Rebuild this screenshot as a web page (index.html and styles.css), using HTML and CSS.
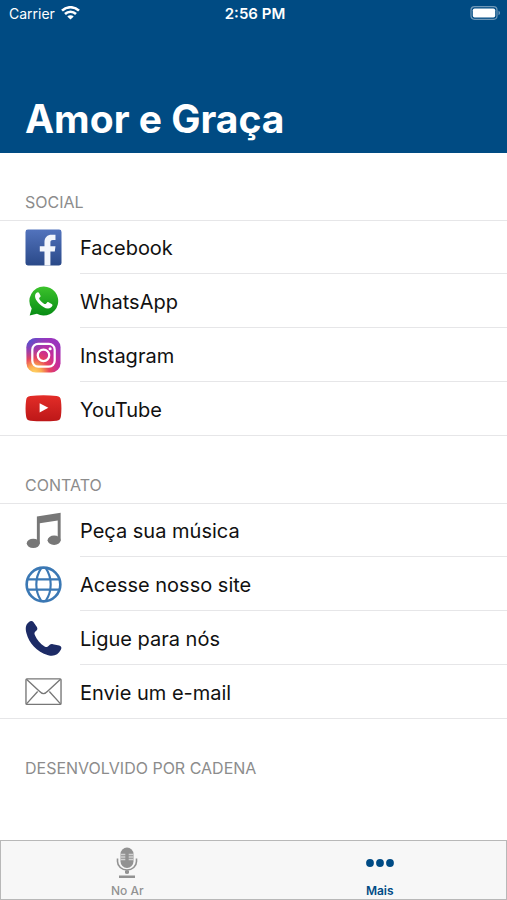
FILE: index.html
```html
<!DOCTYPE html>
<html lang="pt-BR">
<head>
<meta charset="utf-8">
<meta name="viewport" content="width=device-width, initial-scale=1">
<title>Amor e Graça</title>
<link rel="stylesheet" href="styles.css">
</head>
<body>
<div class="app">
  <header class="header">
    <div class="status">
      <span class="carrier">Carrier
        <svg width="19" height="15" viewBox="0 0 19 15" fill="none" stroke="#fff" stroke-width="2.600" aria-hidden="true">
          <path d="M1 4.600a12.400 12.400 0 0 1 17 0"/>
          <path d="M4 8a8 8 0 0 1 11 0"/>
          <path d="M9.500 13.600L6.300 10.600a4.600 4.600 0 0 1 6.400 0z" fill="#fff" stroke="none"/>
        </svg>
      </span>
      <time class="clock">2:56 PM</time>
      <svg class="battery" width="31" height="14" viewBox="0 0 31 14" aria-hidden="true">
        <rect x="1" y=".7" width="26" height="12.600" rx="3.500" fill="none" stroke="#6f98b8" stroke-width="1.200"/>
        <rect x="2.800" y="2.500" width="22.400" height="9" rx="1.800" fill="#fff"/>
        <path d="M28.500 4.800c2 .7 2 3.700 0 4.400z" fill="#6f98b8"/>
      </svg>
    </div>
    <h1 class="title">Amor e Graça</h1>
  </header>

  <main class="content">
    <section>
      <h2 class="heading">SOCIAL</h2>
      <ul class="list">
        <li class="row"><a class="link" href="#facebook">
          <svg class="icon" viewBox="0 0 38 38" aria-hidden="true">
            <defs><linearGradient id="fb" x2="0" y2="1"><stop stop-color="#5273bd"/><stop offset="1" stop-color="#2a4988"/></linearGradient></defs>
            <rect x=".5" y=".5" width="37" height="37" rx="2.500" fill="url(#fb)"/>
            <path d="M20 37.500V23h-4.800v-5.300H20v-4.200c0-5 3-7.700 7.400-7.700 1.800 0 3 .1 3.900.2v5.200h-2.600c-2.200 0-2.600 1.100-2.600 2.700v3.800h5.200l-.7 5.300h-4.500v14.500z" fill="#f3f6fc"/>
          </svg>
          <span class="label">Facebook</span></a></li>
        <li class="row"><a class="link" href="#whatsapp">
          <svg class="icon" viewBox="0 0 38 38" aria-hidden="true">
            <defs><linearGradient id="wa" x2="0" y2="1"><stop stop-color="#3cc32c"/><stop offset="1" stop-color="#078c14"/></linearGradient></defs>
            <path d="M19.300 3.500a14.900 14.900 0 1 1-7 28.100L4.800 33.500l2.100-7.200A14.900 14.900 0 0 1 19.300 3.500z" fill="url(#wa)"/>
            <path d="M14.500 10.200c-.6-1.100-1.800-1-2.900 0-2.700 2.700-.9 7.200 3 11 3.500 3.500 8.400 6.500 12 4 1.700-1.200 2-2.600 1.200-3.300l-3.600-2.200c-1-.6-1.500.1-2.400 1.300-.8.900-1.500.7-3-.3-1.900-1.200-3.100-2.600-4-4-.6-1-.1-1.300.8-2.300.5-.6.4-1.100.2-1.600z" fill="#fff"/>
          </svg>
          <span class="label">WhatsApp</span></a></li>
        <li class="row"><a class="link" href="#instagram">
          <svg class="icon" viewBox="0 0 38 38" aria-hidden="true">
            <defs>
              <radialGradient id="ig" cx=".23" cy="1.020" r="1.050"><stop stop-color="#ffd765"/><stop offset=".2" stop-color="#fbad50"/><stop offset=".42" stop-color="#e8445b"/><stop offset=".68" stop-color="#c82c98"/><stop offset="1" stop-color="#9a35bd"/></radialGradient>
              <radialGradient id="igb" cx="0" cy="0" r=".65"><stop stop-color="#405bd2"/><stop offset="1" stop-color="#6550ce" stop-opacity="0"/></radialGradient>
            </defs>
            <rect x="1.500" y="1" width="35" height="35.500" rx="9.500" fill="url(#ig)"/>
            <rect x="1.500" y="1" width="35" height="35.500" rx="9.500" fill="url(#igb)"/>
            <g fill="none" stroke="#fff" stroke-width="2.300"><rect x="7.500" y="7" width="23" height="23.500" rx="6"/><circle cx="19" cy="18.800" r="5.900"/></g>
            <circle cx="25.800" cy="12" r="1.600" fill="#fff"/>
          </svg>
          <span class="label">Instagram</span></a></li>
        <li class="row"><a class="link" href="#youtube">
          <svg class="icon" viewBox="0 0 38 38" aria-hidden="true">
            <defs><linearGradient id="yt" x2="0" y2="1"><stop stop-color="#e32d28"/><stop offset="1" stop-color="#bd1718"/></linearGradient></defs>
            <path d="M5.500 6.200C14 5 24 5 32.500 6.200c3 .4 4 1.500 4.400 4.500.7 5.400.7 10.900 0 16.300-.4 3-1.400 4.100-4.400 4.500-8.500.8-18.500.8-27 0-3-.4-4-1.500-4.400-4.500-.7-5.400-.7-10.900 0-16.300.4-3 1.400-4.100 4.400-4.500z" fill="url(#yt)"/>
            <path d="M15 13.500v9.600l9-4.800z" fill="#fff"/>
          </svg>
          <span class="label">YouTube</span></a></li>
      </ul>
    </section>

    <section>
      <h2 class="heading">CONTATO</h2>
      <ul class="list">
        <li class="row"><a class="link" href="#musica">
          <svg class="icon" viewBox="0 0 38 38" fill="#777" aria-hidden="true">
            <path d="M12.200 4.500L36.600.7v28.500h-3V8.800L15.200 11.500v20.700h-3z"/>
            <ellipse cx="8.500" cy="32.200" rx="6.700" ry="4.800"/><ellipse cx="29.900" cy="29" rx="6.700" ry="4.800"/>
          </svg>
          <span class="label">Peça sua música</span></a></li>
        <li class="row"><a class="link" href="#site">
          <svg class="icon" viewBox="0 0 38 38" fill="none" stroke="#3b78b4" stroke-width="2.200" aria-hidden="true">
            <circle cx="19" cy="19" r="17.300" stroke-width="2.700"/>
            <path d="M3 13.800h32M3 24.200h32M16.500 2.500C10 12 10 26 16.500 35.500M21.500 2.500C28 12 28 26 21.500 35.500"/>
          </svg>
          <span class="label">Acesse nosso site</span></a></li>
        <li class="row"><a class="link" href="#telefone">
          <svg class="icon" viewBox="0 0 38 38" fill="#1d2b66" aria-hidden="true">
            <path d="M3.500 2.500C5.500.8 7.300.6 8.600 2l3.600 5.200c1 1.700.5 3-1 4.200-1.700 1.500-1.800 2.300-1 4.200 2 4.600 5.400 8.600 9.900 11.500 1.800 1.100 2.800 1 4-.3 1.500-1.700 2.400-2.500 4.500-2l6.500 1.400c2.600.8 2.700 2.400 1.700 4.400-2.600 5.200-7.300 7.200-13 5.500C11.800 32.500 4 23.500 1.500 13.500.3 8.700.5 5 3.500 2.500z"/>
          </svg>
          <span class="label">Ligue para nós</span></a></li>
        <li class="row"><a class="link" href="#email">
          <svg class="icon" viewBox="0 0 38 38" fill="none" stroke="#777" stroke-width="1.400" aria-hidden="true">
            <rect x="1" y="6" width="36" height="26.200" rx="1"/>
            <path d="M1.500 6.500L14.500 18.500c3.500 3.600 5.500 3.600 9 0L36.500 6.500M1.500 31.700L13 19M36.500 31.700L25 19"/>
          </svg>
          <span class="label">Envie um e-mail</span></a></li>
      </ul>
    </section>

    <h2 class="heading">DESENVOLVIDO POR CADENA</h2>
  </main>

  <nav class="tabs">
    <a class="tab" href="#no-ar">
      <svg width="24" height="34" viewBox="0 0 24 34" fill="#929292" aria-hidden="true">
        <path d="M5.500 8a6.500 6.500 0 0 1 13 0v7.500a6.500 6.500 0 0 1-13 0z"/>
        <path d="M5.500 8.500h4.800M5.500 11h4.800M5.500 13.500h4.800M13.700 8.500h4.800M13.700 11h4.800M13.700 13.500h4.800" stroke="#d2d2d2" stroke-width="1.500"/>
        <path d="M2.500 12.500v3a9.500 8.500 0 0 0 19 0v-3M12 24v4" fill="none" stroke="#929292" stroke-width="1.600"/>
        <path d="M10 24.500h4v3h-4zM4 29.500h16v2.500H4z"/>
      </svg>
      No Ar
    </a>
    <a class="tab active" href="#mais" aria-current="page">
      <svg width="28" height="34" viewBox="0 0 28 34" fill="#004b85" aria-hidden="true">
        <circle cx="4" cy="17" r="3.900"/><circle cx="14" cy="17" r="3.900"/><circle cx="24" cy="17" r="3.900"/>
      </svg>
      Mais
    </a>
  </nav>
</div>
</body>
</html>
```
FILE: styles.css
```css
* {
  box-sizing: border-box;
}

body {
  margin: 0;
  background: #fff;
  color: #111;
  font-family: Inter, "Liberation Sans", sans-serif;
}

a {
  color: inherit;
  text-decoration: none;
}

.app {
  display: flex;
  flex-direction: column;
  min-height: 100vh;
}

.header {
  display: flex;
  flex-direction: column;
  gap: 69px;
  padding-bottom: 10px;
  background: #004b83;
  color: #fff;
}

.status {
  display: grid;
  grid-template-columns: 1fr auto 1fr;
  align-items: center;
  height: 26px;
  padding: 0 6px 0 9px;
  font-size: 14px;
}

.carrier {
  display: flex;
  align-items: center;
  gap: 6px;
}

.clock {
  font-size: 15px;
  font-weight: 600;
}

.battery {
  justify-self: end;
}

.title {
  margin: 0;
  padding: 0 25px;
  font-size: 39px;
  font-weight: 700;
  line-height: 48px;
}

.content {
  flex: 1;
}

.heading {
  margin: 0;
  padding: 39px 25px 8px;
  color: #8c8c8c;
  font-size: 16px;
  font-weight: 400;
  line-height: 20px;
}

.list {
  margin: 0;
  padding: 0;
  border: solid #e6e6e8;
  border-width: 1px 0;
  list-style: none;
}

.link {
  display: flex;
  align-items: center;
  gap: 18px;
  height: 54px;
  padding-left: 25px;
}

.icon {
  flex: none;
  width: 37px;
  height: 37px;
}

.label {
  display: flex;
  flex: 1;
  align-items: center;
  align-self: stretch;
  padding-top: 2px;
  border-bottom: 1px solid #e6e6e8;
  font-size: 20px;
}

.row:first-child .link,
.row:last-child .link {
  height: 53px;
}

.row:last-child .label {
  border-bottom: 0;
}

.tabs {
  display: grid;
  grid-template-columns: 1fr 1fr;
  height: 60px;
  border: 1px solid #b8b8b8;
  background: #f7f7f7;
}

.tab {
  display: flex;
  flex-direction: column;
  align-items: center;
  padding-top: 5px;
  color: #929292;
  font-size: 12px;
  font-weight: 500;
  line-height: 22px;
}

.active {
  color: #004b85;
  font-weight: 600;
}
```
